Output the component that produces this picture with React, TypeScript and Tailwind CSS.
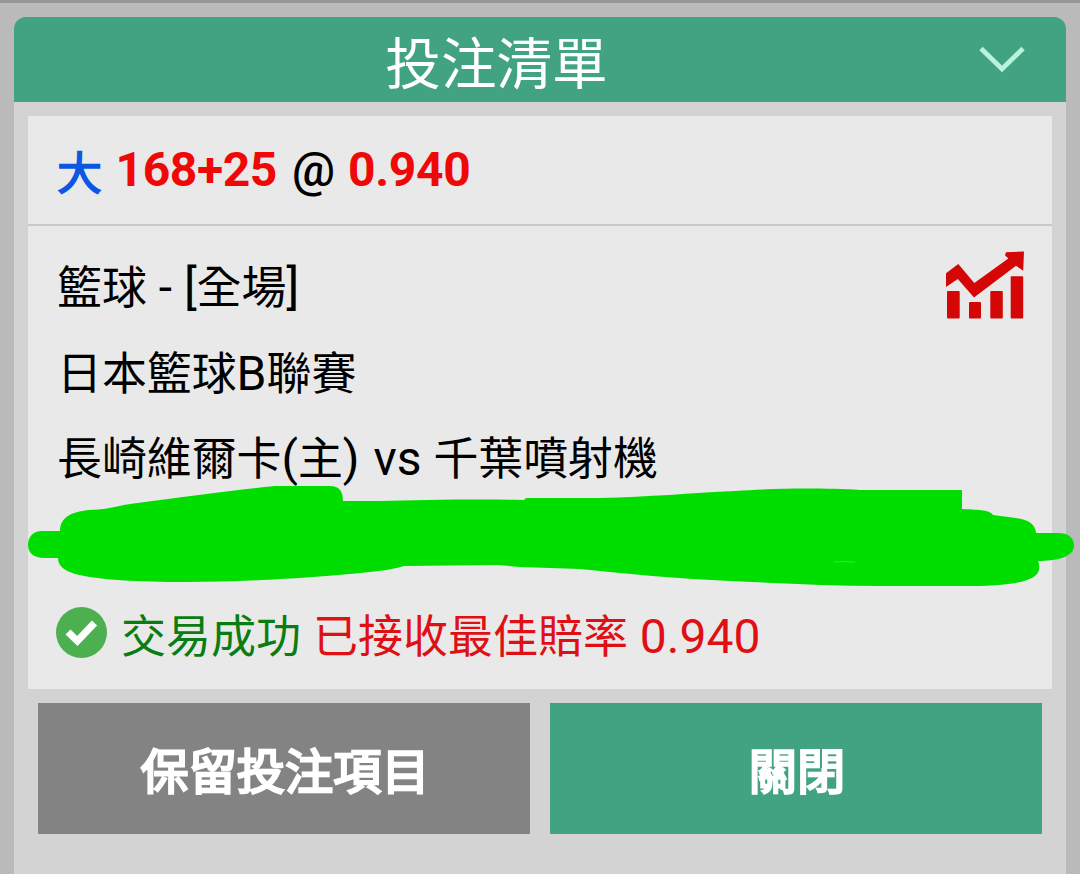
import React from "react"

const Latin = ({ children }: { children: React.ReactNode }) => (
  <span className="text-[48px] whitespace-pre">{children}</span>
)

const ChevronIcon = () => (
  <svg className="w-[46px] h-[28px]" viewBox="0 0 46 28" fill="none">
    <path d="M2 2.5L23 23L44 2.5" stroke="#b9f3dc" strokeWidth="4.8" />
  </svg>
)

const ChartIcon = () => (
  <svg className="w-[80px] h-[70px]" viewBox="0 0 80 70" fill="#d40606">
    <path d="M0 22.3L12.3 13L28.3 32L62.3 7.5L59 4.3L60 1.3L78 .5L77.2 19.7L70 14.8L28 46.5L11.8 28L0 36Z" />
    <rect x="1" y="40" width="12.7" height="27.5" rx="1" />
    <rect x="23" y="51" width="12" height="16.5" rx="1" />
    <rect x="44.3" y="40" width="12.5" height="27.5" rx="1" />
    <rect x="64.7" y="25.2" width="12.5" height="42.3" rx="1" />
  </svg>
)

const SuccessIcon = () => (
  <svg className="w-[53px] h-[53px]" viewBox="0 0 53 53" fill="none">
    <circle cx="26.5" cy="26.5" r="25.5" fill="#4caf50" />
    <path d="M13 26L22.4 35L39.5 17" stroke="#fff" strokeWidth="7.2" />
  </svg>
)

const Marker = () => (
  <svg
    className="absolute top-0 left-0 w-[1080px] h-[874px] pointer-events-none"
    viewBox="0 0 1080 874"
    fill="#00de00"
  >
    <path d="M60 531H42C33 531 28 537 28 545C28 553 34 558 44 558H58C58 567 66 571 75 574C98 580 140 582 185 582C250 582 320 577 360 573C380 571 396 569 404 566L498 565L520 567L580 569C630 574 680 579 730 581C780 583 830 586 880 586L980 586C1010 585 1029 582 1036 575C1040 571 1040 566 1038 561C1056 561 1074 557 1074 546C1074 537 1068 533 1058 533H1036C1035 523 1028 520 1016 518L993 515C989 510 982 510 962 509V490H860C825 488 775 488 735 491C690 493 650 497 600 498H526L524 500C480 499 420 500 380 501H343C343 491 339 486 330 486H275C235 490 190 496 130 504C113 507 103 510 88 510C72 512 60 517 60 531Z" />
    <path d="M834 562Q845 561 855 562" stroke="#3ee33e" fill="none" />
  </svg>
)

const BetSlip = () => (
  <section className="w-full">
    <header className="relative flex h-[85px] items-center justify-center rounded-t-xl bg-[#41a381] pt-[12px] pr-[87px] text-[55.6px] text-white">
      <h1 className="leading-none">投注清單</h1>
      <button className="absolute top-[29px] right-[41px] flex">
        <ChevronIcon />
      </button>
    </header>
    <div className="h-[772px] bg-[#d3d3d3] px-[14px] pt-[14px]">
      <div className="h-[573px] bg-[#e9e9e9]">
        <div className="flex h-[110px] items-center border-b-2 border-[#c9c9c9] px-[29px] text-[48px] leading-none font-bold whitespace-pre">
          <span className="pt-[9px] text-[45px] font-normal text-[#0b57e3] [-webkit-text-stroke:1.5px_#0b57e3]">大</span>
          <span className="pl-[2px] tracking-[-0.4px] text-[#ef0808]"> 168+25</span>
          <span className="pl-[3px] font-medium text-black"> @ </span>
          <span className="pl-[1px] tracking-[-0.3px] text-[#ef0808]">0.940</span>
        </div>
        <div className="flex h-[344px] justify-between pt-[18px] pr-[26px] pl-[29px] text-[44.9px] leading-[86px] text-black">
          <div className="pt-px">
            <p className="h-[86px]">籃球<Latin> - [</Latin>全場<Latin>]</Latin></p>
            <p className="h-[85px]">日本籃球<Latin>B</Latin>聯賽</p>
            <p className="h-[86px]">長崎維爾卡<Latin>(</Latin>主<Latin>)</Latin><span className="pl-[2px]"><Latin> vs </Latin></span>千葉噴射機</p>
          </div>
          <div className="pt-[7px]">
            <ChartIcon />
          </div>
        </div>
        <div className="flex h-[119px] items-start pl-[27px] text-[45px] leading-[86px]">
          <div className="pt-[36px]">
            <SuccessIcon />
          </div>
          <p className="pt-[24px] pl-[13px] text-[#0a7d12]">
            交易成功<Latin> </Latin>
            <span className="text-[#df0f14]">已接收最佳賠率<Latin> 0.940</Latin></span>
          </p>
        </div>
      </div>
      <div className="flex gap-5 px-[10px] pt-[14px] text-[48.2px] text-white [-webkit-text-stroke:2.4px_#fff]">
        <button className="h-[131px] w-[492px] bg-[#838383] pt-[10px] pl-[2px]">保留投注項目</button>
        <button className="h-[131px] w-[492px] bg-[#41a381] pt-[10px] pl-[2px]">關閉</button>
      </div>
    </div>
  </section>
)

const App = () => (
  <main
    lang="zh-Hant"
    className="relative h-[874px] w-[1080px] overflow-hidden border-t-[3px] border-[#989696] bg-[#bababa] px-[14px] pt-[14px] font-[Roboto,'Noto_Sans_CJK_TC',sans-serif]"
  >
    <BetSlip />
    <div className="absolute -top-[3px] left-0">
      <Marker />
    </div>
  </main>
)

export default App
